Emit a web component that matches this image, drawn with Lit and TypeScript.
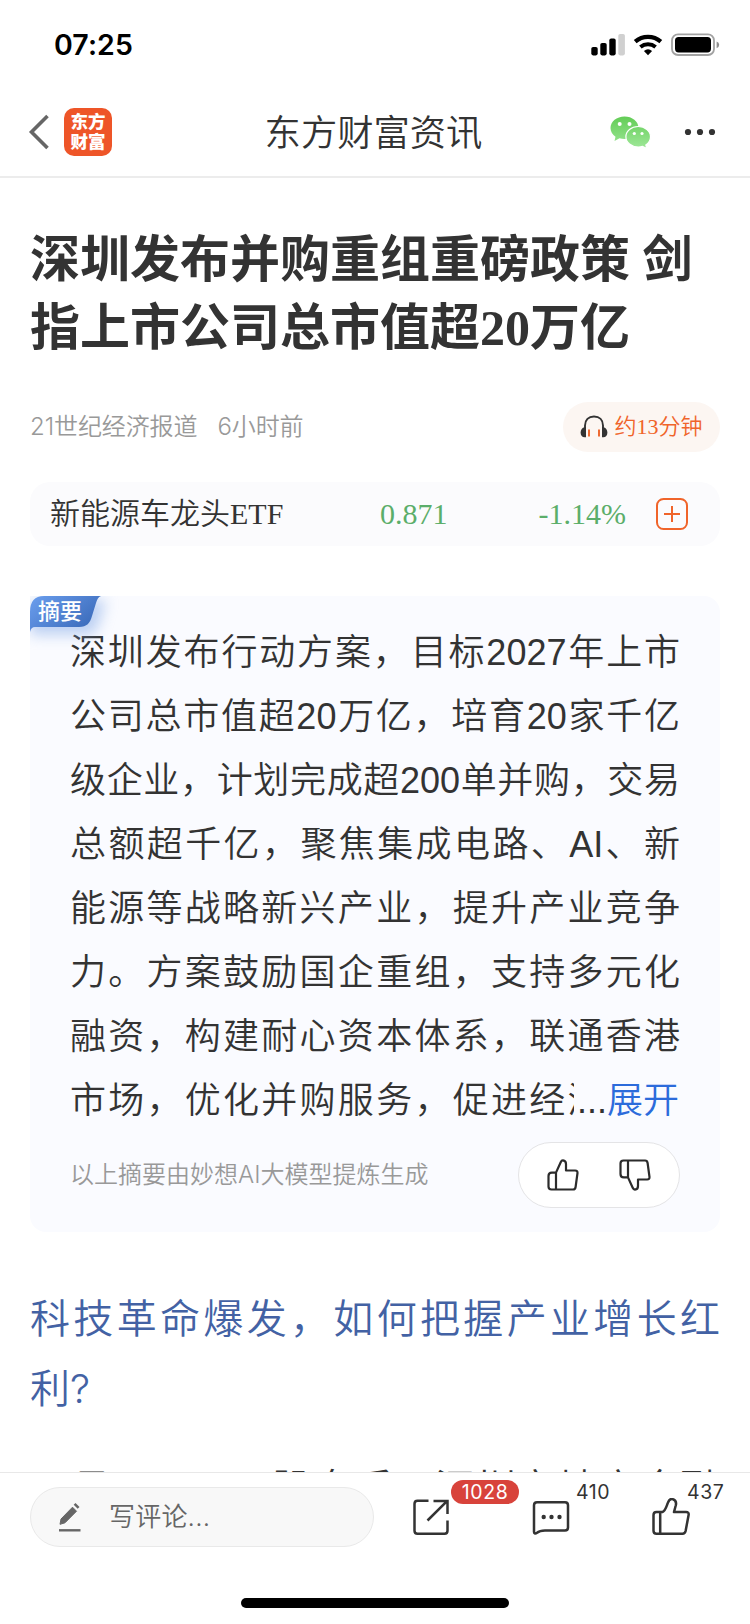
import { LitElement, html, css, svg } from "lit";
import { customElement } from "lit/decorators.js";

const SUMMARY = [
  "深圳发布行动方案，目标2027年上市",
  "公司总市值超20万亿，培育20家千亿",
  "级企业，计划完成超200单并购，交易",
  "总额超千亿，聚焦集成电路、AI、新",
  "能源等战略新兴产业，提升产业竞争",
  "力。方案鼓励国企重组，支持多元化",
  "融资，构建耐心资本体系，联通香港",
  "市场，优化并购服务，促进经济发展",
];

@customElement("status-bar")
class StatusBar extends LitElement {
  static styles = css`
    :host { display: flex; justify-content: space-between; align-items: center; height: 88px; padding: 2px 30px 0 54px; box-sizing: border-box; }
    .time { font: 600 28.5px/36px Inter, sans-serif; color: #000; letter-spacing: 0.1px; }
    .icons { display: block; }
  `;
  render() {
    return html`
      <span class="time">07:25</span>
      <svg class="icons" width="130" height="24" viewBox="590 33 130 24">
        <rect x="591.3" y="47" width="6.4" height="8.4" rx="1.8" />
        <rect x="600.3" y="43" width="6.4" height="12.4" rx="1.8" />
        <rect x="609.3" y="38.6" width="6.4" height="16.8" rx="1.8" />
        <rect x="618.3" y="34" width="6.6" height="21.4" rx="1.8" fill="#d0d0d0" />
        <g fill="none" stroke="#000">
          <path d="M635.2 41.6a19.5 19.5 0 0 1 25.6 0" stroke-width="4.2" />
          <path d="M640.4 47a12.2 12.2 0 0 1 15.2 0" stroke-width="4" />
        </g>
        <path d="M648 55.2l-4.1-4.2a6.4 6.4 0 0 1 8.2 0z" />
        <rect x="672" y="34.4" width="42" height="20.6" rx="6" fill="none" stroke="#a2a2a2" stroke-width="1.8" />
        <rect x="675" y="37" width="36" height="15.4" rx="3.6" />
        <path d="M716.6 41.4q2.6 1 2.6 3.4t-2.6 3.4z" fill="#8f8f8f" />
      </svg>
    `;
  }
}

@customElement("nav-bar")
class NavBar extends LitElement {
  static styles = css`
    :host { display: grid; grid-template-columns: 1fr auto 1fr; align-items: center; height: 90px; padding: 0 34px 0 28px; box-sizing: border-box; border-bottom: 2px solid #ececec; }
    .left { display: flex; align-items: center; gap: 14px; }
    .logo { display: grid; place-content: center; width: 48px; height: 48px; border-radius: 10px; background: #ee5528; color: #fff; font: 900 17.5px/20px "Noto Sans CJK SC", sans-serif; padding-bottom: 3px; box-sizing: border-box; }
    .title { font: 350 36.3px/50px "Noto Sans CJK SC", sans-serif; color: #333; padding: 0 0 4px 3px; }
    .right { display: flex; align-items: center; justify-content: flex-end; gap: 33px; }
    svg { display: block; }
  `;
  render() {
    return html`
      <div class="left">
        <svg width="22" height="36" viewBox="0 0 22 36"><path d="M19.500 2 3.500 18l16 16" fill="none" stroke="#666" stroke-width="3.6" /></svg>
        <div class="logo"><span>东方</span><span>财富</span></div>
      </div>
      <div class="title">东方财富资讯</div>
      <div class="right">
        <svg width="41" height="33" viewBox="0 0 41 33">
          <defs><linearGradient id="g" x1="0" y1="0" x2="0" y2="33" gradientUnits="userSpaceOnUse"><stop stop-color="#62cc55" /><stop offset="1" stop-color="#a0e89a" /></linearGradient></defs>
          <path d="M14.5.5C6.7.5.5 5.600.5 12c0 3.600 2 6.700 5 8.800L4.500 25l5-2.700c1.600.4 3.300.7 5 .7 7.700 0 14-5 14-11.300S22.200.5 14.500.5z" fill="url(#g)" />
          <path d="M28.200 10.500c-6.900 0-12.300 4.500-12.300 10.200S21.300 31 28.200 31c1.500 0 3-.2 4.300-.6l4.300 2.200-1-3.700c2.900-1.900 4.700-4.800 4.700-8.200 0-5.700-5.500-10.200-12.300-10.200z" fill="url(#g)" stroke="#fff" stroke-width="1.200" />
          <g fill="#fff"><circle cx="9.700" cy="8" r="2" /><circle cx="19.500" cy="8" r="2" /><circle cx="24.300" cy="17.500" r="1.600" /><circle cx="32" cy="17.500" r="1.600" /></g>
        </svg>
        <svg width="32" height="8" viewBox="0 0 32 8" fill="#333"><circle cx="4" cy="4" r="3.100" /><circle cx="16" cy="4" r="3.100" /><circle cx="28" cy="4" r="3.100" /></svg>
      </div>
    `;
  }
}

@customElement("summary-card")
class SummaryCard extends LitElement {
  static styles = css`
    :host { display: block; position: relative; height: 636px; box-sizing: border-box; padding: 25px 40px 0; border-radius: 16px; background: #fafbff; }
    .tag { position: absolute; left: 0; top: 0; }
    .tag svg { display: block; overflow: visible; }
    .tag-text { position: absolute; left: 8px; top: 0; font: 500 22px/26px "Noto Sans CJK SC", sans-serif; color: #fff; white-space: nowrap; }
    .lines { position: relative; font: 350 36px/64px "Liberation Sans", "Noto Sans CJK SC", sans-serif; color: #333; }
    .line { text-align: justify; text-align-last: justify; white-space: nowrap; height: 64px; }
    .more { position: absolute; right: 1px; bottom: 0; height: 64px; padding-left: 3px; background: #fafbff; }
    .more::after { content: ""; position: absolute; left: 100%; top: 0; width: 4px; height: 64px; background: #fafbff; }
    .link { color: #2c6bdb; }
    .foot { display: flex; justify-content: space-between; align-items: center; margin-top: 9px; }
    .note { font: 350 24px/36px Inter, "Noto Sans CJK SC", sans-serif; color: #999; }
    .votes { display: flex; align-items: center; justify-content: space-between; width: 162px; height: 66px; box-sizing: border-box; padding: 0 28px; border: 1px solid #e4e4e6; border-radius: 33px; background: #fff; }
    .votes svg { display: block; }
  `;
  render() {
    const outline = svg`<path d="M9 13.600 13.700 3.200C14.300 1.900 15 1.300 16 1.400c2 .2 3 1.800 3 3.700V11.500h9.200c1.700 0 2.500 1 2.300 2.500l-1.900 14c-.2 1.500-1 2.500-2.500 2.500H4.500c-2 0-3-1-3-3V17c0-2.300 1-3.400 3.300-3.400zM9 13.600v16.900" fill="none" stroke="#2b2b2b" stroke-width="2.200" stroke-linejoin="round" />`;
    return html`
      <div class="lines">
        ${SUMMARY.map((l) => html`<div class="line">${l}</div>`)}
        <div class="more">...<span class="link">展开</span></div>
      </div>
      <div class="foot">
        <span class="note">以上摘要由妙想AI大模型提炼生成</span>
        <div class="votes">
          <svg width="32" height="32" viewBox="0 0 32 32">${outline}</svg>
          <svg width="32" height="32" viewBox="0 0 32 32"><g transform="matrix(1 0 0 -1 0 32)">${outline}</g></svg>
        </div>
      </div>
      <div class="tag">
        <svg width="72" height="36" viewBox="0 0 72 36">
          <defs>
            <linearGradient id="b" x1="0" y1="0" x2="1" y2="0.600"><stop stop-color="#6b9eee" /><stop offset="1" stop-color="#3c6cbb" /></linearGradient>
            <filter id="s" x="-30%" y="-30%" width="170%" height="220%"><feGaussianBlur stdDeviation="7" /></filter>
            <clipPath id="c"><path d="M0 0h110v80H0z" /></clipPath>
          </defs>
          <g clip-path="url(#c)"><path d="M0 4h76l-8 26q-3 9-12 9H0z" fill="#7fa6e6" opacity=".5" filter="url(#s)" /></g>
          <path d="M0 16Q0 0 14 0h57c-3 1-4 4-5 7l-4 13c-2 7-5 11-13 11H5q-4 0-5 5z" fill="url(#b)" />
        </svg>
        <span class="tag-text">摘要</span>
      </div>
    `;
  }
}

@customElement("comment-bar")
class CommentBar extends LitElement {
  static styles = css`
    :host { display: flex; flex-direction: column; justify-content: space-between; align-items: center; height: 152px; box-sizing: border-box; padding: 14px 0 16px; border-top: 1px solid #e8e8e8; background: #fff; }
    .row { display: flex; align-items: center; width: 100%; box-sizing: border-box; padding: 0 60px 0 30px; }
    .field { display: flex; align-items: center; gap: 27px; width: 344px; height: 60px; box-sizing: border-box; padding: 0 27px; border: 1px solid #e9e9e9; border-radius: 30px; background: #f8f8f8; font: 350 26px/36px Inter, "Noto Sans CJK SC", sans-serif; letter-spacing: 0.2px; color: #666; }
    .actions { flex: 1; display: flex; justify-content: space-between; align-items: center; padding: 0 0 1px 38px; }
    .action { position: relative; }
    svg { display: block; }
    .count { position: absolute; font: 400 19.5px/24px Inter, sans-serif; color: #333; letter-spacing: 0.6px; }
    .badge { left: 39px; top: -18px; width: 68px; height: 24px; border-radius: 12px; background: #d8433b; color: #fff; text-align: center; }
    .chat { left: 44px; top: -18px; }
    .like { left: 35px; top: -18px; }
    .home { width: 268px; height: 10px; border-radius: 5px; background: #000; }
  `;
  render() {
    return html`
      <div class="row">
        <div class="field">
          <svg width="24" height="30" viewBox="0 0 24 30">
            <path d="M2 22.300 3 17 14.500 5.200l4 4L7 20.800z" fill="#666" stroke="#666" stroke-linejoin="round" />
            <path d="m15.700 2.800 1.800-1.800 4 4-1.800 1.800z" fill="#666" />
            <path d="M1 28.300h21.500" stroke="#666" stroke-width="2.400" />
          </svg>
          <span>写评论...</span>
        </div>
        <div class="actions">
          <div class="action">
            <svg width="38" height="38" viewBox="0 0 38 38" fill="none" stroke="#333" stroke-width="2.500">
              <path d="M16.500 2.700H5.500q-3 0-3 3v27q0 3 3 3h27q3 0 3-3V22.500M15.500 22.500 35 3.200M21.500 2.900h14v13" />
            </svg>
            <span class="count badge">1028</span>
          </div>
          <div class="action">
            <svg width="38" height="38" viewBox="0 0 38 38">
              <path d="M5 4.300h28q3 0 3 3v22.200q0 3-3 3H13c-4 0-6.500 1-8 2.300-1.500 1.200-3 1-3-.8V7.300q0-3 3-3z" fill="none" stroke="#333" stroke-width="2.500" />
              <g fill="#333"><circle cx="11.700" cy="19" r="2.200" /><circle cx="19.500" cy="19" r="2.200" /><circle cx="27.500" cy="19" r="2.200" /></g>
            </svg>
            <span class="count chat">410</span>
          </div>
          <div class="action">
            <svg width="38" height="38" viewBox="0 0 38 38" fill="none" stroke="#333" stroke-width="2.500" stroke-linejoin="round">
              <path d="M10.500 14C13.500 13 14.500 8 16 4.500 17 1.700 18.500.6 20.500 1.100c3 .8 4 3.300 3.300 6.200L22 14h12c2 0 3 1 2.600 3l-3 16q-.6 2.700-3.100 2.700H4.500q-3 0-3-3V17q0-3 3-3zM8.200 14v21.700" />
            </svg>
            <span class="count like">437</span>
          </div>
        </div>
      </div>
      <div class="home"></div>
    `;
  }
}

@customElement("app-root")
class AppRoot extends LitElement {
  static styles = css`
    :host { display: flex; flex-direction: column; width: 750px; height: 1624px; overflow: hidden; background: #fff; }
    .article { flex: 1; min-height: 0; overflow: hidden; padding: 48px 30px 0; }
    h1 { margin: 0; font: 700 50px/68px "Liberation Serif", "Noto Sans CJK SC", sans-serif; color: #333; }
    .meta { display: flex; align-items: center; justify-content: space-between; margin-top: 40px; }
    .source { display: flex; gap: 20px; font: 350 24px/36px Inter, "Noto Sans CJK SC", sans-serif; color: #999; letter-spacing: -0.1px; }
    .listen { display: flex; align-items: center; justify-content: center; gap: 6px; width: 157px; height: 50px; border-radius: 25px; background: #fcf6f2; font: 350 22px/34px "Liberation Serif", "Noto Sans CJK SC", sans-serif; color: #f0642a; }
    .stock { display: flex; align-items: center; height: 64px; margin-top: 30px; padding: 0 32px 0 20px; border-radius: 20px; background: #fbfbfd; font: 350 30px/44px "Liberation Serif", "Noto Sans CJK SC", sans-serif; color: #333; }
    .name { width: 330px; }
    .price, .change { color: #5bae6a; }
    .change { flex: 1; text-align: right; margin-right: 30px; }
    svg { display: block; }
    summary-card { margin-top: 50px; }
    .headline { margin-top: 52px; color: #4362a4; }
    .body { margin-top: 30px; color: #333; }
    .headline, .body { font: 350 40px/70px Inter, "Noto Sans CJK SC", sans-serif; white-space: nowrap; }
    .full { text-align: justify; text-align-last: justify; height: 70px; }
  `;
  render() {
    return html`
      <status-bar></status-bar>
      <nav-bar></nav-bar>
      <main class="article">
        <h1>深圳发布并购重组重磅政策 剑<br />指上市公司总市值超20万亿</h1>
        <div class="meta">
          <div class="source"><span>21世纪经济报道</span><span>6小时前</span></div>
          <div class="listen">
            <svg width="28" height="24" viewBox="0 0 28 24">
              <path d="M5 22V10.500C5 5 8.500 1.500 14 1.500S23 5 23 10.500V22" fill="none" stroke="#333" stroke-width="1.900" />
              <path d="M6 11.800v10.500H4.700C2.200 22.300.6 20.200.6 17.500s1.600-4.900 4.100-5.300zM22 11.800v10.500h1.300c2.500 0 4.100-2.100 4.100-4.800s-1.600-4.900-4.100-5.300z" fill="#333" />
              <path d="M9 14.500v7M19 14.500v7" stroke="#ee6a32" stroke-width="2" />
            </svg>
            <span>约13分钟</span>
          </div>
        </div>
        <div class="stock">
          <span class="name">新能源车龙头ETF</span>
          <span class="price">0.871</span>
          <span class="change">-1.14%</span>
          <svg width="32" height="32" viewBox="0 0 32 32" fill="none" stroke="#f0642a" stroke-width="2"><rect x="1" y="1" width="30" height="30" rx="6.500" /><path d="M8 16h16M16 8v16" /></svg>
        </div>
        <summary-card></summary-card>
        <div class="headline"><div class="full">科技革命爆发，如何把握产业增长红</div><div>利?</div></div>
        <div class="body"><div class="full">10月22日，A股盘后，深圳市地方金融</div></div>
      </main>
      <comment-bar></comment-bar>
    `;
  }
}
